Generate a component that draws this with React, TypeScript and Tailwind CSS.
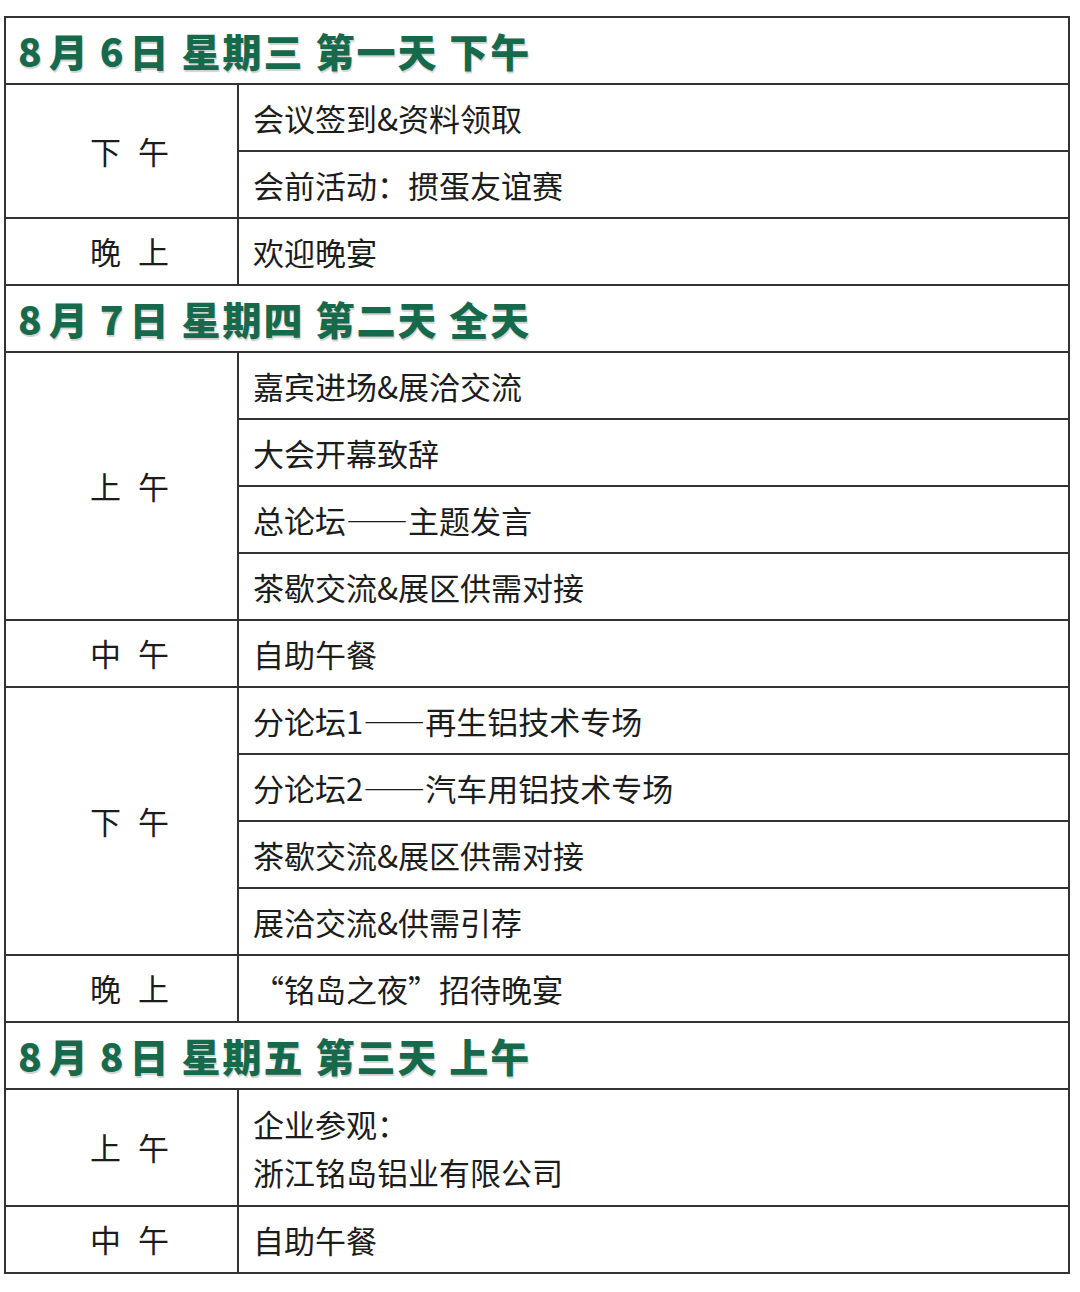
type Group = {
  label: [string, string];
  items: string[][];
};

type Day = {
  title: string;
  groups: Group[];
};

const days: Day[] = [
  {
    title: "8月6日 星期三 第一天 下午",
    groups: [
      { label: ["下", "午"], items: [["会议签到&资料领取"], ["会前活动：掼蛋友谊赛"]] },
      { label: ["晚", "上"], items: [["欢迎晚宴"]] },
    ],
  },
  {
    title: "8月7日 星期四 第二天 全天",
    groups: [
      {
        label: ["上", "午"],
        items: [["嘉宾进场&展洽交流"], ["大会开幕致辞"], ["总论坛——主题发言"], ["茶歇交流&展区供需对接"]],
      },
      { label: ["中", "午"], items: [["自助午餐"]] },
      {
        label: ["下", "午"],
        items: [
          ["分论坛1——再生铝技术专场"],
          ["分论坛2——汽车用铝技术专场"],
          ["茶歇交流&展区供需对接"],
          ["展洽交流&供需引荐"],
        ],
      },
      { label: ["晚", "上"], items: [["“铭岛之夜”招待晚宴"]] },
    ],
  },
  {
    title: "8月8日 星期五 第三天 上午",
    groups: [
      { label: ["上", "午"], items: [["企业参观：", "浙江铭岛铝业有限公司"]] },
      { label: ["中", "午"], items: [["自助午餐"]] },
    ],
  },
];

const font = "font-['Noto_Sans_CJK_SC','Noto_Sans',sans-serif]";

// em dashes render half-width by default; the source uses full-width ones
function Line({ text }: { text: string }) {
  const parts = text.split("——");
  if (parts.length === 1) return <span>{text}</span>;
  return (
    <span>
      {parts[0]}
      <span className="[font-variant-east-asian:full-width]">——</span>
      {parts[1]}
    </span>
  );
}

function DayHeader({ title }: { title: string }) {
  // "8月6日" — the digits sit with extra air around them
  const [month, day, ...rest] = title.split(/[月日]/);
  return (
    <div className="border-b-2 border-[#333]">
      <div className="flex h-[65px] items-center pl-[12px]">
        <span className="text-[39px] font-black leading-none tracking-[2px] text-[#17694b] [text-shadow:1px_2px_1px_rgba(0,0,0,0.18)]">
          <span className="mr-[5px]">{month}</span>月<span className="ml-[10px] mr-[4px]">{day}</span>日
          {rest.join("")}
        </span>
      </div>
    </div>
  );
}

function GroupRow({ group, last }: { group: Group; last: boolean }) {
  return (
    <div className={`flex ${last ? "" : "border-b-2 border-[#333]"}`}>
      <div className="flex w-[233px] shrink-0 items-center justify-center gap-[17px] border-r-2 border-[#333] pl-[16px] text-[31px] text-[#1c1c1c]">
        <span>{group.label[0]}</span>
        <span>{group.label[1]}</span>
      </div>
      <div className="flex flex-1 flex-col">
        {group.items.map((lines, i) => (
          <div key={i} className={i > 0 ? "border-t-2 border-[#333]" : ""}>
            <div
              className={`flex flex-col justify-center pl-[14px] text-[31px] leading-[48px] text-[#1c1c1c] ${
                lines.length > 1 ? "h-[115px]" : "h-[65px]"
              }`}
            >
              {lines.map((l) => (
                <Line key={l} text={l} />
              ))}
            </div>
          </div>
        ))}
      </div>
    </div>
  );
}

export default function App() {
  return (
    <div className={`min-h-[1292px] w-[1080px] bg-white pt-[16px] pl-[4px] ${font}`}>
      <div className="w-[1066px] border-2 border-[#333]">
        {days.map((day, di) => (
          <div key={day.title} className={di > 0 ? "border-t-2 border-[#333]" : ""}>
            <DayHeader title={day.title} />
            {day.groups.map((g, gi) => (
              <GroupRow key={gi} group={g} last={gi === day.groups.length - 1} />
            ))}
          </div>
        ))}
      </div>
    </div>
  );
}
